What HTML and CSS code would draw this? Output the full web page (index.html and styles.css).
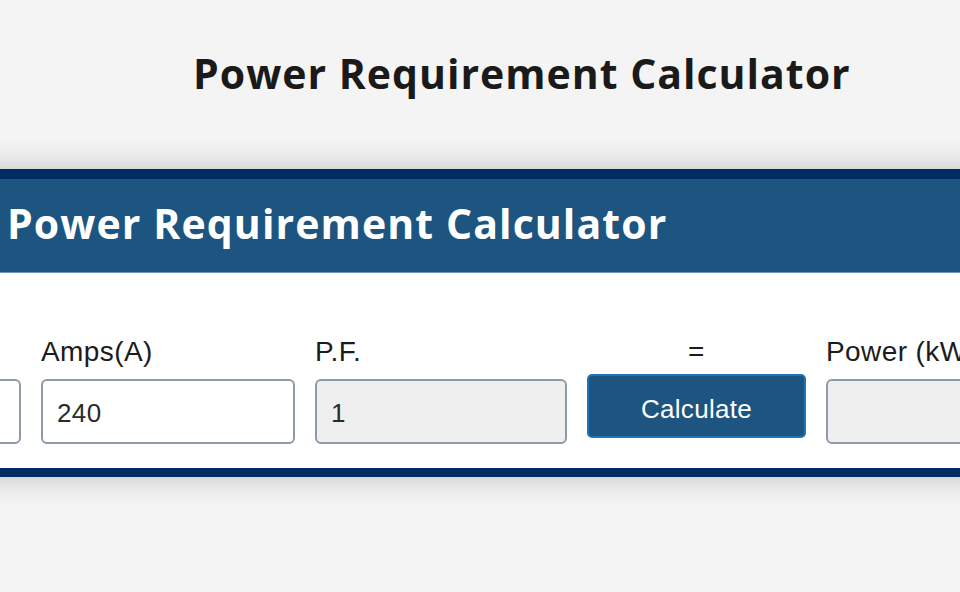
FILE: index.html
```html
<!DOCTYPE html>
<html lang="en">
<head>
<meta charset="utf-8">
<title>Power Requirement Calculator</title>
<link rel="stylesheet" href="styles.css">
</head>
<body>
<h1 class="page-title">Power Requirement Calculator</h1>
<section class="card">
  <header class="card-head">
    <h2 class="card-title">Power Requirement Calculator</h2>
  </header>
  <div class="card-body">
    <div class="field">
      <label class="label">Volts(V)</label>
      <input class="input" type="text" value="480">
    </div>
    <div class="field">
      <label class="label">Amps(A)</label>
      <input class="input" type="text" value="240">
    </div>
    <div class="field">
      <label class="label">P.F.</label>
      <input class="input input-muted" type="text" value="1">
    </div>
    <div class="field field-center">
      <span class="label">=</span>
      <button class="btn" type="button">Calculate</button>
    </div>
    <div class="field">
      <label class="label">Power (kW)</label>
      <input class="input input-muted" type="text" value="">
    </div>
  </div>
</section>
</body>
</html>
```
FILE: styles.css
```css
html, body {
  margin: 0;
  padding: 0;
}
body {
  background: #f4f4f4;
  width: 960px;
  height: 592px;
  overflow: hidden;
  font-family: "Liberation Sans", Arial, sans-serif;
}
.page-title {
  margin: 0;
  padding: 46px 0 0 193px;
  font-family: "Open Sans", "DejaVu Sans", sans-serif;
  font-weight: 700;
  font-size: 41px;
  letter-spacing: 1px;
  line-height: 54px;
  color: #1a1a1a;
  white-space: nowrap;
}
.card {
  margin: 69px 0 0 -250px;
  width: 1500px;
  background: #ffffff;
  border-top: 10px solid #002b63;
  border-bottom: 9px solid #002b63;
  box-shadow: 0 0 28px rgba(0, 0, 0, 0.22);
}
.card-head {
  background: #1d5580;
  height: 94px;
  border-bottom: 1px solid #6f97b8;
  box-sizing: border-box;
  padding: 17px 0 0 257px;
}
.card-title {
  margin: 0;
  font-family: "Open Sans", "DejaVu Sans", sans-serif;
  font-weight: 700;
  font-size: 41px;
  letter-spacing: 1.1px;
  line-height: 54px;
  color: #ffffff;
  white-space: nowrap;
}
.card-body {
  display: grid;
  grid-template-columns: 253px 254px 252px 219px 254px;
  column-gap: 20px;
  padding: 63px 0 24px 18px;
}
.field {
  display: flex;
  flex-direction: column;
  align-items: flex-start;
}
.field-center {
  align-items: center;
}
.label {
  font-size: 28px;
  letter-spacing: 0.4px;
  line-height: 32px;
  color: #1c1c1c;
  white-space: nowrap;
}
.input {
  margin-top: 11px;
  width: 100%;
  height: 65px;
  box-sizing: border-box;
  border: 2px solid #8e9aa7;
  border-radius: 6px;
  background: #ffffff;
  padding: 4px 14px 0;
  font-family: "Liberation Sans", Arial, sans-serif;
  font-size: 26px;
  letter-spacing: 0.4px;
  color: #2a2a2a;
  outline: none;
}
.input-muted {
  background: #efefef;
}
.btn {
  margin-top: 6px;
  width: 100%;
  height: 64px;
  box-sizing: border-box;
  border: 2px solid #1f76b7;
  border-radius: 5px;
  background: #1d5580;
  color: #ffffff;
  font-family: "Liberation Sans", Arial, sans-serif;
  font-size: 26px;
  letter-spacing: 0.3px;
  padding: 7px 0 0;
  cursor: pointer;
}
```
